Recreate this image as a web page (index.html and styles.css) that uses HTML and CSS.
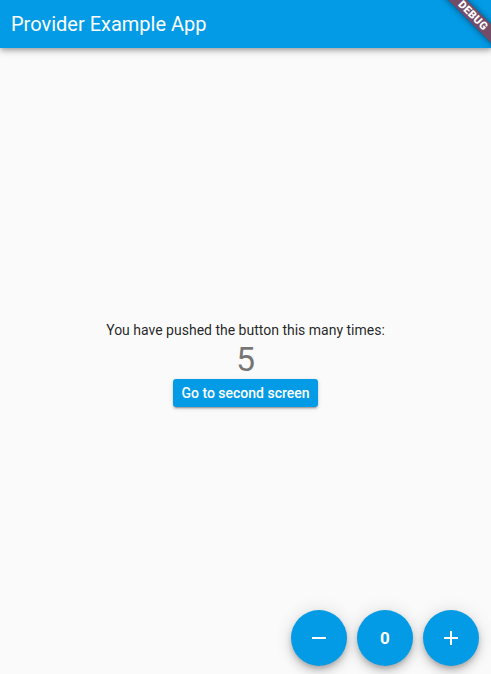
FILE: index.html
```html
<!DOCTYPE html>
<html>
<head>
<meta charset="utf-8">
<link rel="stylesheet" href="styles.css">
</head>
<body>
<div class="app">
  <header class="appbar"><h1 class="title">Provider Example App</h1></header>
  <main class="content">
    <p class="label">You have pushed the button this many times:</p>
    <div class="count">5</div>
    <button class="raised">Go to second screen</button>
  </main>
  <div class="fabs">
    <button class="fab" aria-label="decrement">
      <svg width="24" height="24" viewBox="0 0 24 24"><path d="M5 11h14v2H5z" fill="#fff"/></svg>
    </button>
    <button class="fab fab-text">0</button>
    <button class="fab" aria-label="increment">
      <svg width="24" height="24" viewBox="0 0 24 24"><path d="M19 13h-6v6h-2v-6H5v-2h6V5h2v6h6v2z" fill="#fff"/></svg>
    </button>
  </div>
  <div class="banner">DEBUG</div>
</div>
</body>
</html>
```
FILE: styles.css
```css
* { box-sizing: border-box; }
html, body { margin: 0; padding: 0; }
body {
  background: #fafafa;
  font-family: Roboto, "Noto Sans", sans-serif;
  overflow: hidden;
}
.app {
  position: relative;
  width: 491px;
  height: 674px;
  overflow: hidden;
  display: flex;
  flex-direction: column;
}
.appbar {
  height: 48px;
  background: #039be5;
  box-shadow: 0 2px 4px -1px rgba(0,0,0,0.2), 0 4px 5px 0 rgba(0,0,0,0.14), 0 1px 10px 0 rgba(0,0,0,0.12);
  display: flex;
  align-items: center;
  padding-left: 11px;
  position: relative;
  z-index: 1;
  flex: none;
}
.title {
  margin: 0;
  color: #fff;
  font-size: 20px;
  font-weight: 400;
  line-height: 24px;
}
.content {
  flex: 1;
  display: flex;
  flex-direction: column;
  align-items: center;
  padding-top: 274px;
}
.label {
  margin: 0;
  font-size: 14px;
  line-height: 17px;
  color: rgba(0,0,0,0.87);
}
.count {
  font-size: 34px;
  line-height: 40px;
  color: rgba(0,0,0,0.54);
}
.raised {
  height: 28px;
  padding: 0 8px;
  border: none;
  border-radius: 3px;
  background: #039be5;
  color: #fff;
  font-family: Roboto, sans-serif;
  font-size: 14px;
  font-weight: 500;
  box-shadow: 0 3px 1px -2px rgba(0,0,0,0.2), 0 2px 2px 0 rgba(0,0,0,0.14), 0 1px 5px 0 rgba(0,0,0,0.12);
}
.fabs {
  position: absolute;
  right: 12px;
  bottom: 8px;
  display: flex;
  gap: 10px;
}
.fab {
  width: 56px;
  height: 56px;
  border-radius: 50%;
  border: none;
  padding: 0;
  background: #039be5;
  display: flex;
  align-items: center;
  justify-content: center;
  box-shadow: 0 3px 5px -1px rgba(0,0,0,0.2), 0 6px 10px 0 rgba(0,0,0,0.14), 0 1px 18px 0 rgba(0,0,0,0.12);
}
.fab-text {
  color: #fff;
  font-family: Roboto, sans-serif;
  font-size: 17px;
  font-weight: 700;
}
.banner {
  position: absolute;
  left: 433px;
  top: 9px;
  width: 80px;
  height: 13px;
  transform: rotate(45deg);
  background: rgba(183,28,28,0.627);
  color: #fff;
  font-size: 11px;
  font-weight: 900;
  letter-spacing: 0.3px;
  line-height: 13px;
  text-align: center;
  z-index: 2;
  box-shadow: 0 0 6px rgba(0,0,0,0.5);
}
```
